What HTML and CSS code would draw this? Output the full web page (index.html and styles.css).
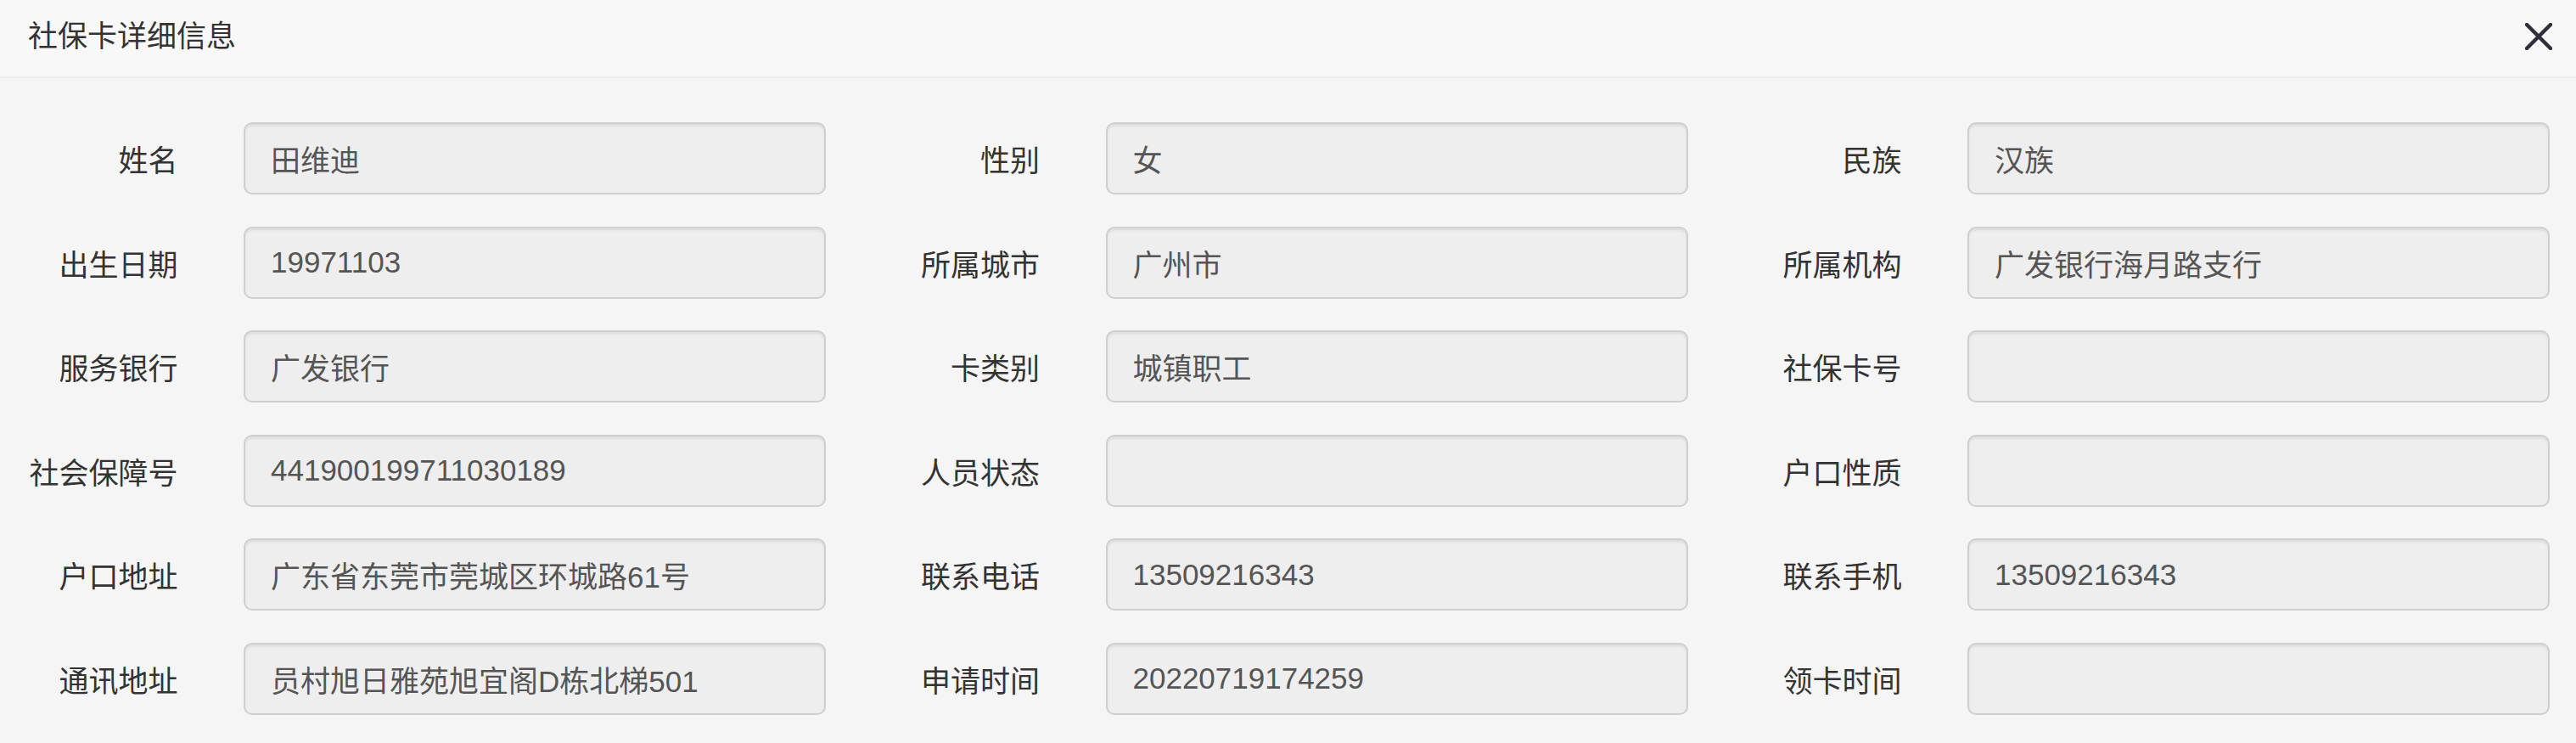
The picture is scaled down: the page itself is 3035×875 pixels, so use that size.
FILE: index.html
```html
<!DOCTYPE html>
<html lang="zh-CN">
<head>
<meta charset="utf-8">
<title>社保卡详细信息</title>
<link rel="stylesheet" href="styles.css">
</head>
<body>
<div class="modal">
  <div class="modal-header">
    <div class="modal-title">社保卡详细信息</div>
    <button class="close" type="button" aria-label="关闭">
      <svg width="32" height="32" viewBox="0 0 32 32"><path d="M2 2 L30 30 M30 2 L2 30" stroke="#2f2f3a" stroke-width="4.5" stroke-linecap="round" fill="none"/></svg>
    </button>
  </div>
  <div class="modal-body">
    <div class="form">
      <div class="field"><label>姓名</label><div class="control">田维迪</div></div>
      <div class="field"><label>性别</label><div class="control">女</div></div>
      <div class="field"><label>民族</label><div class="control">汉族</div></div>

      <div class="field"><label>出生日期</label><div class="control">19971103</div></div>
      <div class="field"><label>所属城市</label><div class="control">广州市</div></div>
      <div class="field"><label>所属机构</label><div class="control">广发银行海月路支行</div></div>

      <div class="field"><label>服务银行</label><div class="control">广发银行</div></div>
      <div class="field"><label>卡类别</label><div class="control">城镇职工</div></div>
      <div class="field"><label>社保卡号</label><div class="control"></div></div>

      <div class="field"><label>社会保障号</label><div class="control">441900199711030189</div></div>
      <div class="field"><label>人员状态</label><div class="control"></div></div>
      <div class="field"><label>户口性质</label><div class="control"></div></div>

      <div class="field"><label>户口地址</label><div class="control">广东省东莞市莞城区环城路61号</div></div>
      <div class="field"><label>联系电话</label><div class="control">13509216343</div></div>
      <div class="field"><label>联系手机</label><div class="control">13509216343</div></div>

      <div class="field"><label>通讯地址</label><div class="control">员村旭日雅苑旭宜阁D栋北梯501</div></div>
      <div class="field"><label>申请时间</label><div class="control">20220719174259</div></div>
      <div class="field"><label>领卡时间</label><div class="control"></div></div>
    </div>
  </div>
</div>
</body>
</html>
```

FILE: styles.css
```css
html, body {
  margin: 0;
  padding: 0;
  background: #f5f5f5;
}
body {
  font-family: "Liberation Sans", "Noto Sans CJK SC", sans-serif;
  font-size: 35px;
  color: #333;
}
.modal {
  width: 3035px;
  height: 875px;
  overflow: hidden;
  background: #f5f5f5;
}
.modal-header {
  height: 92px;
  box-sizing: border-box;
  display: flex;
  align-items: center;
  padding: 0 28px 4px 33px;
  background: #f8f8f8;
  border-bottom: 2px solid #ececec;
}
.modal-title {
  font-size: 35px;
  color: #333;
  line-height: 1.2;
}
.close {
  margin-left: auto;
  width: 32px;
  height: 32px;
  padding: 0;
  border: 0;
  background: transparent;
  display: flex;
}
.modal-body {
  padding-top: 52px;
}
.form {
  display: grid;
  grid-template-columns: repeat(3, 1015.5px);
  row-gap: 37.6px;
  margin-left: -4.5px;
}
.field {
  display: grid;
  grid-template-columns: 254px 761px;
  align-items: center;
}
.field label {
  text-align: right;
  padding-right: 40px;
  color: #333;
  white-space: nowrap;
}
.control {
  margin: 0 37.5px;
  height: 85px;
  box-sizing: border-box;
  border: 2px solid #cfcfcf;
  border-radius: 10px;
  background: #eeeeee;
  box-shadow: inset 0 2.5px 2.5px rgba(0, 0, 0, 0.075);
  color: #555;
  padding: 0 30px;
  display: flex;
  align-items: center;
  white-space: nowrap;
}
```
